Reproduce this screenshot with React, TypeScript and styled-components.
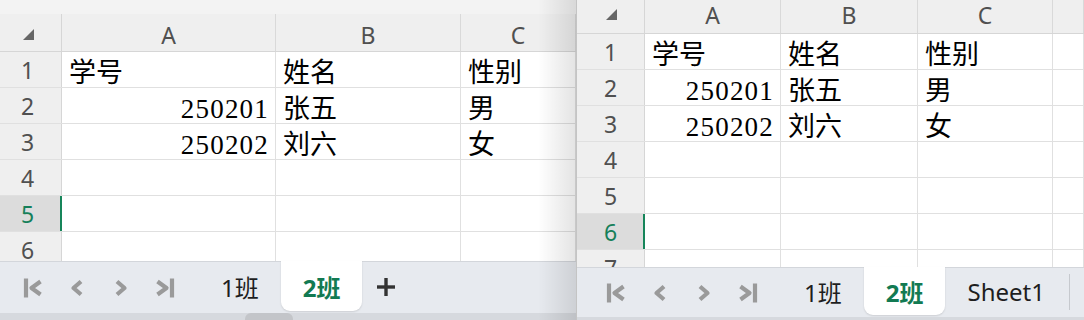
import styled, { createGlobalStyle } from "styled-components";

const GlobalStyle = createGlobalStyle`
  html, body {
    margin: 0;
    padding: 0;
    background: #ffffff;
  }
  body {
    width: 1084px;
    height: 320px;
    overflow: hidden;
    font-family: "Noto Sans", "Noto Sans CJK SC", sans-serif;
  }
`;

const data = [
  ["学号", "姓名", "性别"],
  ["250201", "张五", "男"],
  ["250202", "刘六", "女"],
];

type SheetProps = {
  width: number;
  shift?: number;
  edge?: boolean;
  topStrip: number;
  headHeight: number;
  headPadTop: number;
  headPadBottom: number;
  letters: string[];
  cols: number[];
  rows: number;
  active: number;
  barHeight: number;
  bottomHeight: number;
  thumb?: boolean;
  tabs: string[];
  current: string;
  plus?: boolean;
  separator?: boolean;
};

const Sheet = (p: SheetProps) => {
  const colCount = p.letters.length;
  return (
    <Window $w={p.width} $shift={p.shift ?? 0} $edge={!!p.edge}>
      <Grid>
        {p.topStrip > 0 && <TopStrip $h={p.topStrip} />}
        <HeaderRow $h={p.headHeight} $pt={p.headPadTop} $pb={p.headPadBottom}>
          <Corner>
            <svg width="12" height="12" viewBox="0 0 12 12">
              <polygon points="11,0 11,11 0,11" fill="#666" />
            </svg>
          </Corner>
          {p.letters.map((l, i) => (
            <ColHead key={i} $w={p.cols[i]}>
              {l}
            </ColHead>
          ))}
        </HeaderRow>
        {Array.from({ length: p.rows }).map((_, r) => (
          <Row key={r}>
            <RowHead $active={r + 1 === p.active}>{r + 1}</RowHead>
            {Array.from({ length: colCount }).map((_, c) => {
              const v = data[r]?.[c] ?? "";
              const num = /^\d+$/.test(v);
              return (
                <Cell key={c} $w={p.cols[c]} $num={num}>
                  {v}
                </Cell>
              );
            })}
          </Row>
        ))}
      </Grid>
      <TabBar $h={p.barHeight}>
        <Nav>
          <NavIcon viewBox="0 0 20 20">
            <line x1="3" y1="0.5" x2="3" y2="19.5" />
            <polyline points="17.5,3.5 8.5,10 17.5,16.5" />
          </NavIcon>
          <NavIcon viewBox="0 0 20 20">
            <polyline points="14,3.5 6.5,10 14,16.5" />
          </NavIcon>
          <NavIcon viewBox="0 0 20 20">
            <polyline points="6,3.5 13.5,10 6,16.5" />
          </NavIcon>
          <NavIcon viewBox="0 0 20 20">
            <polyline points="2.5,3.5 11.5,10 2.5,16.5" />
            <line x1="17" y1="0.5" x2="17" y2="19.5" />
          </NavIcon>
        </Nav>
        <Tabs>
          {p.tabs.map((t) => (
            <Tab key={t} $active={t === p.current} $h={p.barHeight - 2}>
              {t}
            </Tab>
          ))}
          {p.separator && <TabSep />}
          {p.plus && (
            <Plus viewBox="0 0 20 20">
              <line x1="10" y1="1" x2="10" y2="19" />
              <line x1="1" y1="10" x2="19" y2="10" />
            </Plus>
          )}
        </Tabs>
      </TabBar>
      <BottomStrip $h={p.bottomHeight}>{p.thumb && <Thumb />}</BottomStrip>
      {p.edge && <EdgeShade />}
    </Window>
  );
};

const App = () => (
  <>
    <GlobalStyle />
    <Page>
      <Sheet
        width={582}
        shift={-6}
        edge
        topStrip={14}
        headHeight={38}
        headPadTop={4}
        headPadBottom={0}
        letters={["A", "B", "C"]}
        cols={[214, 185]}
        rows={7}
        active={5}
        barHeight={52}
        bottomHeight={7}
        thumb
        tabs={["1班", "2班"]}
        current="2班"
        plus
      />
      <Sheet
        width={508}
        topStrip={0}
        headHeight={34}
        headPadTop={0}
        headPadBottom={3}
        letters={["A", "B", "C", ""]}
        cols={[136, 137, 135]}
        rows={8}
        active={6}
        barHeight={50}
        bottomHeight={3}
        tabs={["1班", "2班", "Sheet1"]}
        current="2班"
        separator
      />
    </Page>
  </>
);

export default App;

const Page = styled.div`
  display: flex;
  width: 1084px;
  height: 320px;
  overflow: hidden;
`;

const Window = styled.div<{ $w: number; $shift: number; $edge: boolean }>`
  position: relative;
  display: flex;
  flex-direction: column;
  flex-shrink: 0;
  width: ${(p) => p.$w}px;
  height: 320px;
  margin-left: ${(p) => p.$shift}px;
  overflow: hidden;
  box-sizing: border-box;
  border-left: ${(p) => (p.$edge ? "none" : "1px solid #c4c4c4")};
`;

const Grid = styled.div`
  flex: 1;
  overflow: hidden;
  background: #ffffff;
`;

const TopStrip = styled.div<{ $h: number }>`
  height: ${(p) => p.$h}px;
  background: #f3f3f3;
`;

const HeaderRow = styled.div<{ $h: number; $pt: number; $pb: number }>`
  display: flex;
  height: ${(p) => p.$h}px;
  box-sizing: border-box;
  background: #efefef;
  border-bottom: 1px solid #d6d6d6;

  & > * {
    padding-top: ${(p) => p.$pt}px;
    padding-bottom: ${(p) => p.$pb}px;
  }
`;

const Corner = styled.div`
  display: flex;
  align-items: center;
  justify-content: center;
  width: 68px;
  flex-shrink: 0;
  box-sizing: border-box;
  border-right: 1px solid #d6d6d6;
  padding-left: 2px;
`;

const ColHead = styled.div<{ $w?: number }>`
  display: flex;
  align-items: center;
  justify-content: center;
  ${(p) => (p.$w ? `width: ${p.$w}px; flex-shrink: 0;` : "flex: 1;")}
  box-sizing: border-box;
  border-right: 1px solid #d9d9d9;
  font-family: "Noto Sans", sans-serif;
  font-size: 23px;
  color: #505050;
`;

const Row = styled.div`
  display: flex;
  height: 36px;
  box-sizing: border-box;
  border-bottom: 1px solid #e0e0e0;
`;

const RowHead = styled.div<{ $active: boolean }>`
  display: flex;
  align-items: center;
  justify-content: center;
  width: 68px;
  flex-shrink: 0;
  box-sizing: border-box;
  background: ${(p) => (p.$active ? "#dcdcdc" : "#efefef")};
  border-right: 1px solid ${(p) => (p.$active ? "#16855a" : "#d6d6d6")};
  box-shadow: ${(p) => (p.$active ? "inset -1px 0 0 #16855a" : "none")};
  font-family: "Noto Sans", sans-serif;
  font-size: 23px;
  color: ${(p) => (p.$active ? "#16805a" : "#505050")};
`;

const Cell = styled.div<{ $w?: number; $num: boolean }>`
  ${(p) => (p.$w ? `width: ${p.$w}px; flex-shrink: 0;` : "flex: 1;")}
  box-sizing: border-box;
  border-right: 1px solid #e0e0e0;
  padding: 6px 6px 0 7px;
  font-family: "Liberation Serif", "Noto Sans CJK SC", serif;
  font-size: 27px;
  line-height: 30px;
  color: #000000;
  white-space: nowrap;
  overflow: hidden;
  text-align: ${(p) => (p.$num ? "right" : "left")};
  letter-spacing: ${(p) => (p.$num ? "1.2px" : "0")};
`;

const TabBar = styled.div<{ $h: number }>`
  display: flex;
  align-items: center;
  height: ${(p) => p.$h}px;
  flex-shrink: 0;
  box-sizing: border-box;
  background: #e7eaef;
  border-top: 1px solid #d3d6db;
`;

const Nav = styled.div`
  display: flex;
  align-items: center;
  gap: 24px;
  padding-left: 29px;
`;

const NavIcon = styled.svg`
  width: 20px;
  height: 20px;
  fill: none;
  stroke: #9a9a9a;
  stroke-width: 4.2;
  stroke-linejoin: round;
`;

const Tabs = styled.div`
  display: flex;
  align-items: flex-start;
  align-self: stretch;
  margin-left: 24px;
  margin-top: -1px;
`;

const Tab = styled.div<{ $active: boolean; $h: number }>`
  display: flex;
  align-items: center;
  height: ${(p) => p.$h}px;
  padding: 0 22px;
  font-family: "Noto Sans", "Noto Sans CJK SC", sans-serif;
  font-size: 24px;
  font-weight: ${(p) => (p.$active ? 700 : 400)};
  color: ${(p) => (p.$active ? "#127a52" : "#1e1e1e")};
  background: ${(p) => (p.$active ? "#ffffff" : "transparent")};
  border-radius: 0 0 9px 9px;
  box-shadow: ${(p) => (p.$active ? "0 1px 2px rgba(0, 0, 0, 0.12)" : "none")};
`;

const TabSep = styled.div`
  width: 1px;
  height: 36px;
  align-self: center;
  margin-left: 2px;
  background: #c6c9ce;
`;

const Plus = styled.svg`
  width: 20px;
  height: 20px;
  align-self: center;
  margin-left: 14px;
  stroke: #333333;
  stroke-width: 3.4;
`;

const BottomStrip = styled.div<{ $h: number }>`
  display: flex;
  align-items: flex-end;
  height: ${(p) => p.$h}px;
  flex-shrink: 0;
  background: #d6d9de;
`;

const Thumb = styled.div`
  width: 48px;
  height: 7px;
  margin-left: 251px;
  border-radius: 6px 6px 0 0;
  background: #c3c5c9;
`;

const EdgeShade = styled.div`
  position: absolute;
  top: 0;
  right: 0;
  bottom: 0;
  width: 38px;
  background: linear-gradient(to right, rgba(0, 0, 0, 0), rgba(0, 0, 0, 0.11));
  pointer-events: none;
`;
